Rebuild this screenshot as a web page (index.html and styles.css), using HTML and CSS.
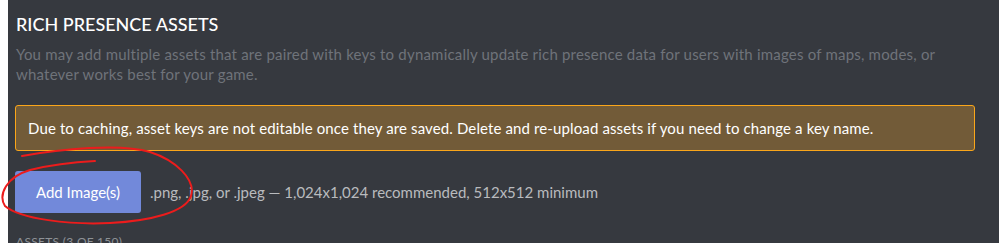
FILE: index.html
```html
<!DOCTYPE html>
<html lang="en">
<head>
    <meta charset="UTF-8">
    <title>Rich Presence Assets</title>
    <link rel="stylesheet" href="styles.css">
</head>
<body>
    <div class="page">
        <h2 class="title">Rich Presence Assets</h2>
        <p class="description">You may add multiple assets that are paired with keys to dynamically update rich presence data for users with images of maps, modes, or whatever works best for your game.</p>

        <div class="warning">Due to caching, asset keys are not editable once they are saved. Delete and re-upload assets if you need to change a key name.</div>

        <div class="upload-row">
            <button class="btn">Add Image(s)</button>
            <span class="hint">.png, .jpg, or .jpeg — 1,024x1,024 recommended, 512x512 minimum</span>

            <svg class="scribble" width="210" height="90" viewBox="0 140 210 90">
                <path d="M22 155 C60 148, 120 142, 150 151 C175 159, 196 178, 191 195 C186 211, 150 220, 110 222 C70 224, 20 218, 5 205 C-2 194, 6 176, 30 169 C50 164, 75 161, 95 160" />
            </svg>
        </div>

        <div class="assets-label">Assets (3 of 150)</div>
    </div>
</body>
</html>
```

FILE: styles.css
```css
* {
    margin: 0;
    padding: 0;
    box-sizing: border-box;
}

body {
    background: #fff;
    font-family: Lato, "Open Sans", sans-serif;
    overflow: hidden;
}

.page {
    margin-left: 8px;
    min-height: 100vh;
    background: #36393f;
    padding: 13px 24px 0 7px;
}

.title {
    color: #fff;
    font-size: 18px;
    font-weight: 500;
    line-height: 22px;
    text-transform: uppercase;
    margin-left: 1px;
}

.description {
    color: #6f737a;
    font-size: 15px;
    letter-spacing: 0.2px;
    line-height: 20px;
    margin: 9px 0 0 1px;
}

.warning {
    margin-top: 21px;
    background: #725b38;
    border: 1px solid #faa61a;
    border-radius: 3px;
    color: #fff;
    font-size: 15px;
    letter-spacing: 0.12px;
    line-height: 20px;
    padding: 12px 12px;
}

.upload-row {
    position: relative;
    display: flex;
    align-items: center;
    gap: 9px;
    margin-top: 20px;
}

.btn {
    width: 126px;
    height: 42px;
    border: none;
    border-radius: 3px;
    background: #7289da;
    color: #fff;
    font-family: inherit;
    font-size: 15px;
}

.hint {
    color: #b9bbbe;
    font-size: 15px;
}

.scribble {
    position: absolute;
    left: -15px;
    top: -30px;
    fill: none;
    stroke: #ec1c1c;
    stroke-width: 2;
    stroke-linecap: round;
    overflow: visible;
}

.assets-label {
    margin-top: 21px;
    color: #8e9297;
    font-size: 12px;
    letter-spacing: 0.3px;
    text-transform: uppercase;
    margin-left: 1px;
}
```
